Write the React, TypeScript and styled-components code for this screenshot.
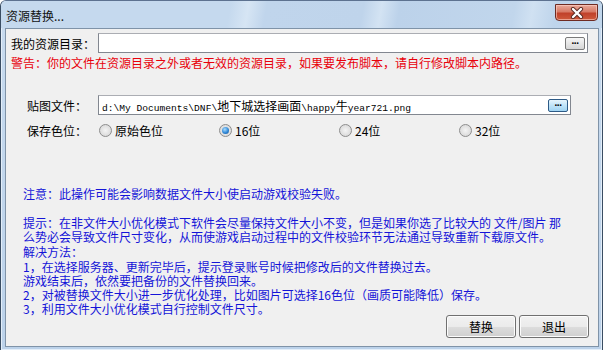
import styled, { createGlobalStyle } from "styled-components";

const GlobalStyle = createGlobalStyle`
    html, body {
        margin: 0;
        padding: 0;
        background: #ffffff;
    }
    body {
        font-family: "Noto Sans CJK SC", "Liberation Sans", sans-serif;
        font-size: 12px;
    }
`;

const solution = [
    "1，在选择服务器、更新完毕后，提示登录账号时候把修改后的文件替换过去。",
    "游戏结束后，依然要把备份的文件替换回来。",
    "2，对被替换文件大小进一步优化处理，比如图片可选择16色位（画质可能降低）保存。",
    "3，利用文件大小优化模式自行控制文件尺寸。",
];

const colorOptions = [
    { label: "原始色位", checked: false },
    { label: "16位", checked: true },
    { label: "24位", checked: false },
    { label: "32位", checked: false },
];

export default function App() {
    return (
        <>
            <GlobalStyle />
            <WindowStyled>
                <TitleBarStyled>
                    <TitleText>资源替换...</TitleText>
                    <CloseButton>
                        <svg width="18" height="12" viewBox="0 0 18 12">
                            <path d="M5 2 L13 10 M13 2 L5 10" stroke="#5a2a22" strokeWidth="4.2" strokeLinecap="round" />
                            <path d="M5 2 L13 10 M13 2 L5 10" stroke="#ffffff" strokeWidth="2.4" strokeLinecap="round" />
                        </svg>
                    </CloseButton>
                </TitleBarStyled>

                <ClientStyled>
                    <FieldRow $indent={5}>
                        <FieldLabel $width={87}>我的资源目录：</FieldLabel>
                        <InputBox $width={490}>
                            <span />
                            <BrowseButton>...</BrowseButton>
                        </InputBox>
                    </FieldRow>

                    <WarningText>
                        警告：你的文件在资源目录之外或者无效的资源目录，如果要发布脚本，请自行修改脚本内路径。
                    </WarningText>

                    <FieldRow $indent={21} $top={25}>
                        <FieldLabel $width={71}>贴图文件：</FieldLabel>
                        <InputBox $width={473}>
                            <PathText>
                                d:\My Documents\DNF\<Cjk>地下城选择画面</Cjk>\happy<Cjk>牛</Cjk>year721.png
                            </PathText>
                            <BrowseButton $focused>...</BrowseButton>
                        </InputBox>
                    </FieldRow>

                    <RadioRow>
                        <FieldLabel $width={72}>保存色位：</FieldLabel>
                        {colorOptions.map((o) => (
                            <RadioItem key={o.label}>
                                <RadioCircle $checked={o.checked} />
                                <span>{o.label}</span>
                            </RadioItem>
                        ))}
                    </RadioRow>

                    <NoteText $top={49}>注意：此操作可能会影响数据文件大小使启动游戏校验失败。</NoteText>

                    <NoteText $top={15}>
                        提示：在非文件大小优化模式下软件会尽量保持文件大小不变，但是如果你选了比较大的 文件/图片 那
                        <br />
                        么势必会导致文件尺寸变化，从而使游戏启动过程中的文件校验环节无法通过导致重新下载原文件。
                    </NoteText>

                    <BottomRow>
                        <SolutionBlock>
                            <SolutionTitle>解决方法：</SolutionTitle>
                            {solution.map((line) => (
                                <div key={line}>{line}</div>
                            ))}
                        </SolutionBlock>
                        <ButtonGroup>
                            <DialogButton>替换</DialogButton>
                            <DialogButton>退出</DialogButton>
                        </ButtonGroup>
                    </BottomRow>
                </ClientStyled>
            </WindowStyled>
        </>
    );
}

const WindowStyled = styled.div`
    width: 601px;
    height: 349px;
    border: 1px solid #3a4d63;
    border-top-color: #5d7290;
    border-radius: 6px 6px 0 0;
    background: linear-gradient(180deg, #c8dbef 0%, #bcd2ea 100%);
    display: flex;
    flex-direction: column;
    overflow: hidden;
    box-shadow: inset 0 0 0 1px #e3eef9;
`;

const TitleBarStyled = styled.div`
    height: 27px;
    display: flex;
    align-items: flex-start;
    justify-content: space-between;
    padding: 0 4px 0 5px;
    background: linear-gradient(100deg,
        #c5d9ee 0%, #c5d9ee 38%, #d6e5f4 41%, #c0d5ec 44%,
        #bfd4eb 60%, #d3e3f3 63%, #bcd2ea 66%,
        #c1d6ec 85%, #d0e1f2 88%, #bed4eb 92%, #c3d8ed 100%);
`;

const TitleText = styled.div`
    margin-top: 7px;
    font-size: 12px;
    line-height: 16px;
    color: #111;
`;

const CloseButton = styled.div`
    flex-shrink: 0;
    width: 43px;
    height: 17px;
    box-sizing: border-box;
    margin-top: 3px;
    border: 1px solid #6e2b22;
    border-radius: 0 0 4px 4px;
    background: linear-gradient(180deg, #e8a99a 0%, #d77a66 45%, #c0412a 55%, #cf5a3c 100%);
    display: flex;
    align-items: center;
    justify-content: center;
    box-shadow: inset 0 0 0 1px rgba(255, 210, 200, 0.6);
`;

const ClientStyled = styled.div`
    flex: 1;
    margin: 0 3px 3px 4px;
    border: 1px solid #7f93a8;
    background: #f0f0f0;
    padding: 4px 0 0 0;
    display: flex;
    flex-direction: column;
`;

const FieldRow = styled.div<{ $indent: number; $top?: number }>`
    display: flex;
    align-items: center;
    padding-left: ${(p) => p.$indent}px;
    margin-top: ${(p) => p.$top ?? 0}px;
    height: 20px;
`;

const FieldLabel = styled.div<{ $width: number }>`
    width: ${(p) => p.$width}px;
    flex-shrink: 0;
    font-size: 12px;
    color: #000;
    white-space: nowrap;
`;

const InputBox = styled.div<{ $width: number }>`
    width: ${(p) => p.$width}px;
    height: 20px;
    box-sizing: border-box;
    border: 1px solid #828790;
    border-top-color: #abadb3;
    background: #ffffff;
    display: flex;
    align-items: center;
    justify-content: space-between;
    padding: 0 2px 0 3px;
`;

const PathText = styled.span`
    font-family: "Liberation Mono", monospace;
    font-size: 9.6px;
    color: #000;
    white-space: nowrap;
`;

const Cjk = styled.span`
    font-family: "Noto Sans CJK SC", sans-serif;
    font-size: 12px;
`;

const BrowseButton = styled.div<{ $focused?: boolean }>`
    width: 20px;
    height: 13px;
    box-sizing: border-box;
    border: 1px solid ${(p) => (p.$focused ? "#2d5a86" : "#7a7a7a")};
    border-radius: 2px;
    background: ${(p) =>
        p.$focused
            ? "linear-gradient(180deg, #e6f4fc 0%, #bfe3f8 50%, #9fd3f2 100%)"
            : "linear-gradient(180deg, #f6f6f6 0%, #e6e6e6 50%, #d6d6d6 100%)"};
    font-family: "Liberation Sans", sans-serif;
    font-size: 10px;
    font-weight: bold;
    line-height: 6px;
    text-align: center;
    color: #000;
    letter-spacing: -0.5px;
`;

const WarningText = styled.div`
    margin: 3px 0 0 5px;
    font-size: 12px;
    line-height: 14px;
    color: #e8000b;
    white-space: nowrap;
`;

const RadioRow = styled.div`
    display: flex;
    align-items: center;
    padding-left: 21px;
    margin-top: 7px;
    height: 16px;
`;

const RadioItem = styled.div`
    width: 120px;
    display: flex;
    align-items: center;
    gap: 3px;
    font-size: 12px;
    color: #000;
`;

const RadioCircle = styled.div<{ $checked: boolean }>`
    width: 13px;
    height: 13px;
    box-sizing: border-box;
    border-radius: 50%;
    border: 1px solid #8d8d8d;
    background: radial-gradient(circle at 50% 50%, #f4f4f4 0%, #dcdcdc 70%, #cfcfcf 100%);
    position: relative;

    &::after {
        content: "";
        display: ${(p) => (p.$checked ? "block" : "none")};
        position: absolute;
        left: 2px;
        top: 2px;
        width: 7px;
        height: 7px;
        border-radius: 50%;
        background: radial-gradient(circle at 40% 35%, #a8dcff 0%, #2f87d6 55%, #1a4f8c 100%);
    }
`;

const NoteText = styled.div<{ $top: number }>`
    margin: ${(p) => p.$top}px 0 0 17px;
    font-size: 12px;
    line-height: 14px;
    color: #1414d8;
    white-space: nowrap;
`;

const SolutionBlock = styled.div`
    flex: 1;
    min-width: 0;
    margin-left: 17px;
    font-size: 12px;
    line-height: 14px;
    color: #1414d8;
    white-space: nowrap;
`;

const SolutionTitle = styled.div`
    margin-bottom: 1px;
`;

const BottomRow = styled.div`
    display: flex;
    align-items: flex-start;
    margin-top: 1px;
    padding-right: 9px;
`;

const ButtonGroup = styled.div`
    flex-shrink: 0;
    display: flex;
    gap: 3px;
    margin-top: 70px;
`;

const DialogButton = styled.div`
    width: 70px;
    height: 23px;
    box-sizing: border-box;
    border: 1px solid #707070;
    border-radius: 3px;
    background: linear-gradient(180deg, #f2f2f2 0%, #ebebeb 50%, #dddddd 51%, #cfcfcf 100%);
    box-shadow: inset 0 0 0 1px #fcfcfc;
    display: flex;
    align-items: center;
    justify-content: center;
    font-size: 12px;
    color: #000;
`;
